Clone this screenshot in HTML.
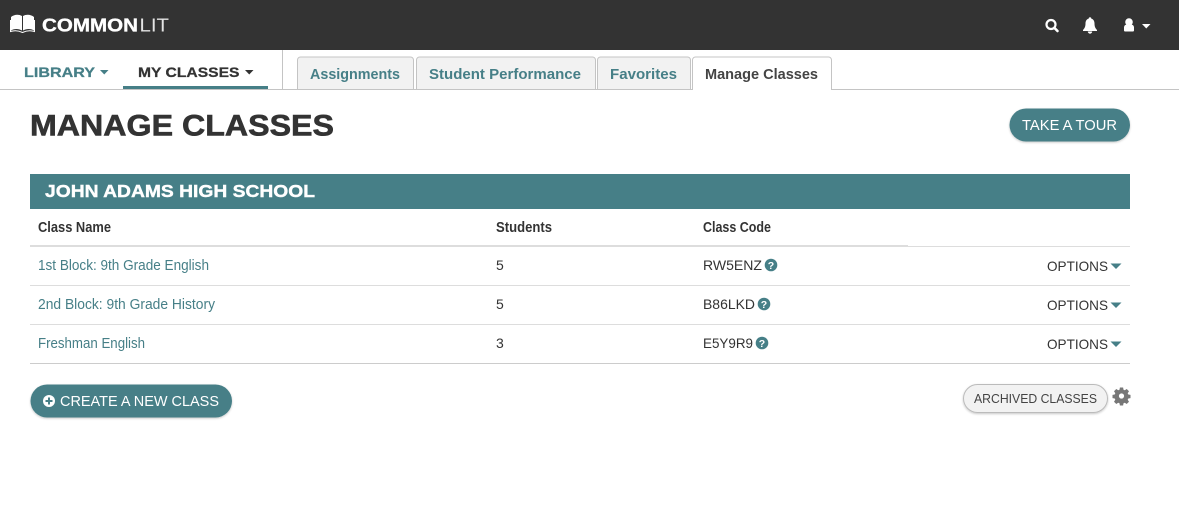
<!DOCTYPE html>
<html>
<head>
<meta charset="utf-8">
<style>
html,body{margin:0;padding:0;background:#fff;width:1179px;height:515px;overflow:hidden}
svg{display:block}
text{font-family:"Liberation Sans",sans-serif}
.b{font-weight:bold}
</style>
</head>
<body>
<svg width="1179" height="515" viewBox="0 0 1179 515" xmlns="http://www.w3.org/2000/svg">
<defs>
<filter id="sh" x="-10%" y="-20%" width="120%" height="150%"><feDropShadow dx="0" dy="1" stdDeviation="1" flood-color="#000" flood-opacity=".22"/></filter>
</defs>
<rect width="1179" height="515" fill="#fff"/>
<!-- top bar -->
<rect width="1179" height="50" fill="#333"/>
<path d="M11 17c3-2.500 7.500-3 11-1v14.500c-3.500-2-8-2-11 0zM34 17c-3-2.500-7.500-3-11-1v14.500c3.500-2 8-2 11 0z" fill="#fff"/>
<path d="M10.500 20v11.500c4-1.300 8-1 12 1 4-2 8-2.300 12-1V20" fill="none" stroke="#fff" stroke-width="1"/>
<text x="42" y="31.500" class="b" font-size="18.500" fill="#fff" stroke="#fff" stroke-width=".35" textLength="96" lengthAdjust="spacingAndGlyphs">COMMON</text>
<text x="139.500" y="31.500" font-size="18.500" fill="#e4e4e4" textLength="29.500" lengthAdjust="spacingAndGlyphs">LIT</text>
<circle cx="1051" cy="24.500" r="4.500" fill="none" stroke="#fff" stroke-width="2.200"/>
<path d="M1054.500 28l3 3" stroke="#fff" stroke-width="2.600" stroke-linecap="round"/>
<path d="M1090 18.500c3.200 0 4.500 2.300 4.500 5 0 3.200 1 5 2.500 6.500v1h-14v-1c1.500-1.500 2.500-3.300 2.500-6.500 0-2.700 1.300-5 4.500-5z" fill="#fff"/>
<circle cx="1090" cy="18.500" r="1.300" fill="#fff"/>
<path d="M1087.800 31.500h4.400a2.200 2.200 0 0 1-4.400 0z" fill="#fff"/>
<circle cx="1129" cy="22" r="3.800" fill="#fff"/>
<path d="M1124 30.500v-3c0-1.700 1.200-3 3-3h4c1.800 0 3 1.300 3 3v3c0 .6-.5 1-1 1h-8c-.5 0-1-.4-1-1z" fill="#fff"/>
<path d="M1142 24h8.500l-4.250 4.500z" fill="#fff"/>
<!-- nav -->
<rect x="0" y="89" width="1179" height="1" fill="#c4c4c4"/>
<rect x="282" y="50" width="1" height="40" fill="#c4c4c4"/>
<text x="24" y="77" class="b" font-size="14" fill="#467f87" stroke="#467f87" stroke-width=".25" textLength="71" lengthAdjust="spacingAndGlyphs">LIBRARY</text>
<path d="M100 70h8.500l-4.250 4.500z" fill="#467f87"/>
<text x="138" y="77" class="b" font-size="14" fill="#333" stroke="#333" stroke-width=".25" textLength="101.500" lengthAdjust="spacingAndGlyphs">MY CLASSES</text>
<path d="M245 70h8.500l-4.250 4.500z" fill="#333"/>
<rect x="123" y="86" width="145" height="3" fill="#467f87"/>
<!-- tabs -->
<path d="M297.500 89.500V60a3 3 0 0 1 3-3h110a3 3 0 0 1 3 3v29.500z" fill="#f2f2f2" stroke="#c4c4c4"/>
<path d="M416.500 89.500V60a3 3 0 0 1 3-3h173a3 3 0 0 1 3 3v29.500z" fill="#f2f2f2" stroke="#c4c4c4"/>
<path d="M597.500 89.500V60a3 3 0 0 1 3-3h87a3 3 0 0 1 3 3v29.500z" fill="#f2f2f2" stroke="#c4c4c4"/>
<path d="M692.500 90V60a3 3 0 0 1 3-3h133a3 3 0 0 1 3 3v30" fill="#fff" stroke="#c4c4c4"/>
<rect x="693" y="89" width="138" height="1.500" fill="#fff"/>
<text x="310" y="79" class="b" font-size="14.500" fill="#467f87" textLength="90" lengthAdjust="spacingAndGlyphs">Assignments</text>
<text x="429" y="79" class="b" font-size="14.500" fill="#467f87" textLength="152" lengthAdjust="spacingAndGlyphs">Student Performance</text>
<text x="610" y="79" class="b" font-size="14.500" fill="#467f87" textLength="67" lengthAdjust="spacingAndGlyphs">Favorites</text>
<text x="705" y="79" class="b" font-size="14.500" fill="#444" textLength="113" lengthAdjust="spacingAndGlyphs">Manage Classes</text>
<!-- title -->
<text x="30" y="135.500" class="b" font-size="29.500" fill="#333" stroke="#333" stroke-width=".6" textLength="304" lengthAdjust="spacingAndGlyphs">MANAGE CLASSES</text>
<rect x="1009.500" y="108.500" width="120.500" height="33" rx="16.500" fill="#467f87" filter="url(#sh)"/>
<text x="1022" y="130" font-size="14.500" fill="#fff" textLength="95" lengthAdjust="spacingAndGlyphs">TAKE A TOUR</text>
<!-- band -->
<rect x="30" y="174" width="1100" height="35" fill="#467f87"/>
<text x="45" y="197" class="b" font-size="17.500" fill="#fff" stroke="#fff" stroke-width=".4" textLength="270" lengthAdjust="spacingAndGlyphs">JOHN ADAMS HIGH SCHOOL</text>
<!-- header -->
<text x="38" y="232" class="b" font-size="14.500" fill="#333" textLength="73" lengthAdjust="spacingAndGlyphs">Class Name</text>
<text x="496" y="232" class="b" font-size="14.500" fill="#333" textLength="56" lengthAdjust="spacingAndGlyphs">Students</text>
<text x="703" y="232" class="b" font-size="14.500" fill="#333" textLength="68" lengthAdjust="spacingAndGlyphs">Class Code</text>
<rect x="30" y="245" width="878" height="2" fill="#ddd"/>
<rect x="908" y="246" width="222" height="1" fill="#ddd"/>
<rect x="30" y="285" width="1100" height="1" fill="#ddd"/>
<rect x="30" y="324" width="1100" height="1" fill="#ddd"/>
<rect x="30" y="363" width="1100" height="1" fill="#ccc"/>
<!-- row 1 -->
<text x="38" y="270" font-size="14.500" fill="#467f87" textLength="171" lengthAdjust="spacingAndGlyphs">1st Block: 9th Grade English</text>
<text x="496" y="270" font-size="14" fill="#333">5</text>
<text x="703" y="270" font-size="14" fill="#333" textLength="59" lengthAdjust="spacingAndGlyphs">RW5ENZ</text>
<circle cx="771" cy="265" r="6.300" fill="#467f87"/>
<text x="771" y="269" font-size="10.500" class="b" fill="#fff" text-anchor="middle">?</text>
<text x="1047" y="271" font-size="14" fill="#333" textLength="61" lengthAdjust="spacingAndGlyphs">OPTIONS</text>
<path d="M1110.500 263.500h11l-5.500 5.500z" fill="#467f87"/>
<!-- row 2 -->
<text x="38" y="309" font-size="14.500" fill="#467f87" textLength="177" lengthAdjust="spacingAndGlyphs">2nd Block: 9th Grade History</text>
<text x="496" y="309" font-size="14" fill="#333">5</text>
<text x="703" y="309" font-size="14" fill="#333" textLength="52" lengthAdjust="spacingAndGlyphs">B86LKD</text>
<circle cx="764" cy="304" r="6.300" fill="#467f87"/>
<text x="764" y="308" font-size="10.500" class="b" fill="#fff" text-anchor="middle">?</text>
<text x="1047" y="310" font-size="14" fill="#333" textLength="61" lengthAdjust="spacingAndGlyphs">OPTIONS</text>
<path d="M1110.500 302.500h11l-5.500 5.500z" fill="#467f87"/>
<!-- row 3 -->
<text x="38" y="348" font-size="14.500" fill="#467f87" textLength="107" lengthAdjust="spacingAndGlyphs">Freshman English</text>
<text x="496" y="348" font-size="14" fill="#333">3</text>
<text x="703" y="348" font-size="14" fill="#333" textLength="50" lengthAdjust="spacingAndGlyphs">E5Y9R9</text>
<circle cx="762" cy="343" r="6.300" fill="#467f87"/>
<text x="762" y="347" font-size="10.500" class="b" fill="#fff" text-anchor="middle">?</text>
<text x="1047" y="349" font-size="14" fill="#333" textLength="61" lengthAdjust="spacingAndGlyphs">OPTIONS</text>
<path d="M1110.500 341.500h11l-5.500 5.500z" fill="#467f87"/>
<!-- create -->
<rect x="30.500" y="384.500" width="201.500" height="33" rx="16.500" fill="#467f87" filter="url(#sh)"/>
<circle cx="49" cy="401" r="6" fill="#fff"/>
<path d="M45.500 401h7M49 397.500v7" stroke="#467f87" stroke-width="2"/>
<text x="60" y="406" font-size="14.500" fill="#fff" textLength="159" lengthAdjust="spacingAndGlyphs">CREATE A NEW CLASS</text>
<!-- archived -->
<rect x="963.500" y="384.500" width="144" height="28" rx="14" fill="#f2f2f2" stroke="#bbb" filter="url(#sh)"/>
<text x="974" y="403" font-size="12.500" fill="#444" textLength="123" lengthAdjust="spacingAndGlyphs">ARCHIVED CLASSES</text>
<g transform="translate(1121.500 396)" fill="#777">
<path fill-rule="evenodd" d="M-1.600-8.500h3.200l.4 2.200 1.300.6 1.900-1.300 2.300 2.300-1.300 1.900.6 1.300 2.200.4v3.200l-2.200.4-.6 1.300 1.300 1.900-2.300 2.300-1.900-1.300-1.300.6-.4 2.200h-3.200l-.4-2.200-1.300-.6-1.900 1.300-2.300-2.300 1.300-1.900-.6-1.300-2.200-.4v-3.200l2.200-.4.6-1.300-1.300-1.900 2.300-2.300 1.900 1.300 1.300-.6zM0-2.600a2.600 2.600 0 1 0 0 5.200a2.600 2.600 0 1 0 0-5.200z"/>
</g>
</svg>
</body>
</html>
